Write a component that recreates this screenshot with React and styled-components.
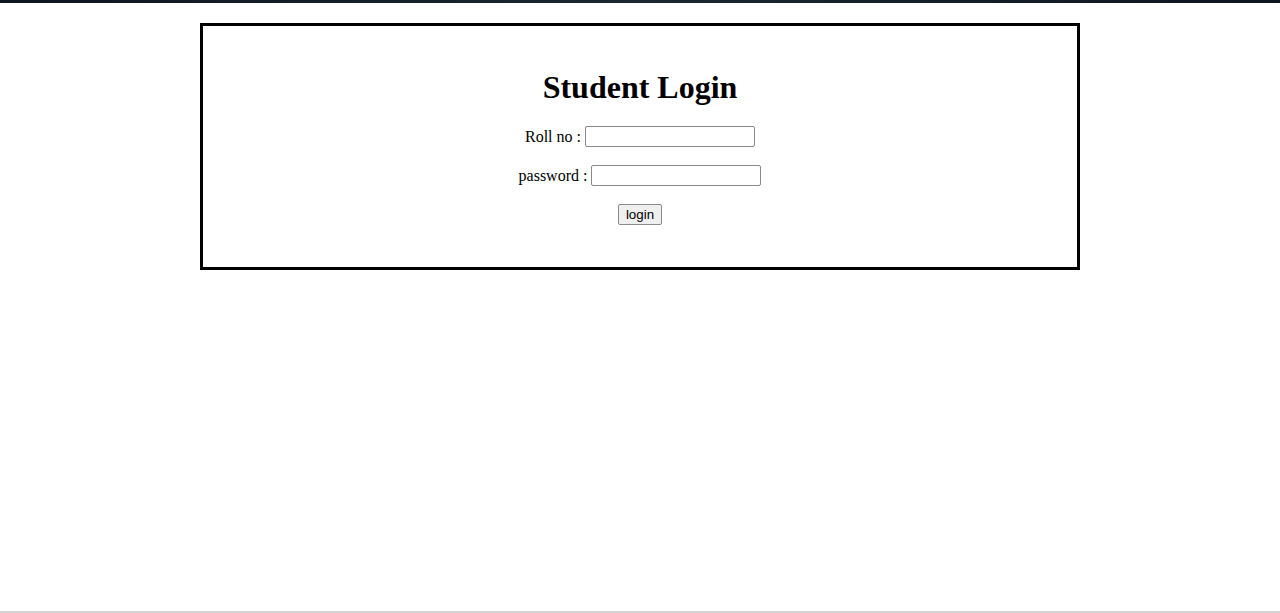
import React from 'react'
import styled, { createGlobalStyle } from 'styled-components'

const GlobalStyle = createGlobalStyle`
  html, body {
    margin: 0;
    padding: 0;
    background: #ffffff;
  }
  body {
    font-family: "Liberation Serif", "Times New Roman", serif;
    color: #000;
  }
`

const Page = styled.div`
  display: flex;
  flex-direction: column;
  height: 613px;
  overflow: hidden;
`

const TopStrip = styled.div`
  height: 3px;
  background: linear-gradient(to right, #0c1520, #1c2733 50%, #0c1520);
`

const Main = styled.main`
  flex: 1;
  padding-top: 20px;
`

const BottomStrip = styled.div`
  height: 2px;
  background: #d3d3d3;
`

const LoginBox = styled.div`
  width: 874px;
  margin: 0 auto;
  border: 3px solid #000;
  padding: 43px 0 42px;
  text-align: center;
`

const Title = styled.h1`
  margin: 0;
  font-size: 32px;
  line-height: 37px;
  font-weight: bold;
`

const Form = styled.form`
  display: flex;
  flex-direction: column;
  align-items: center;
  gap: 18px;
  margin-top: 20px;
`

const Row = styled.div`
  display: flex;
  align-items: center;
  justify-content: center;
  height: 21px;
  font-size: 16px;
`

const Label = styled.label`
  margin-right: 4px;
  white-space: pre;
`

const Input = styled.input`
  box-sizing: border-box;
  width: 170px;
  height: 21px;
  border: 1px solid #8a8a8a;
  border-radius: 2px;
  padding: 1px 2px;
  background: #fff;
`

const Button = styled.button`
  box-sizing: border-box;
  width: 44px;
  height: 21px;
  padding: 0;
  border: 1px solid #8a8a8a;
  border-radius: 2px;
  background: #efefef;
  font-family: "Liberation Sans", Arial, sans-serif;
  font-size: 13.33px;
  color: #000;
`

export default function App() {
  return (
    <Page>
      <GlobalStyle />
      <TopStrip />
      <Main>
        <LoginBox>
          <Title>Student Login</Title>
          <Form onSubmit={(e) => e.preventDefault()}>
            <Row>
              <Label htmlFor="roll">Roll no :</Label>
              <Input id="roll" type="text" />
            </Row>
            <Row>
              <Label htmlFor="pass">password :</Label>
              <Input id="pass" type="password" />
            </Row>
            <Row>
              <Button type="submit">login</Button>
            </Row>
          </Form>
        </LoginBox>
      </Main>
      <BottomStrip />
    </Page>
  )
}
